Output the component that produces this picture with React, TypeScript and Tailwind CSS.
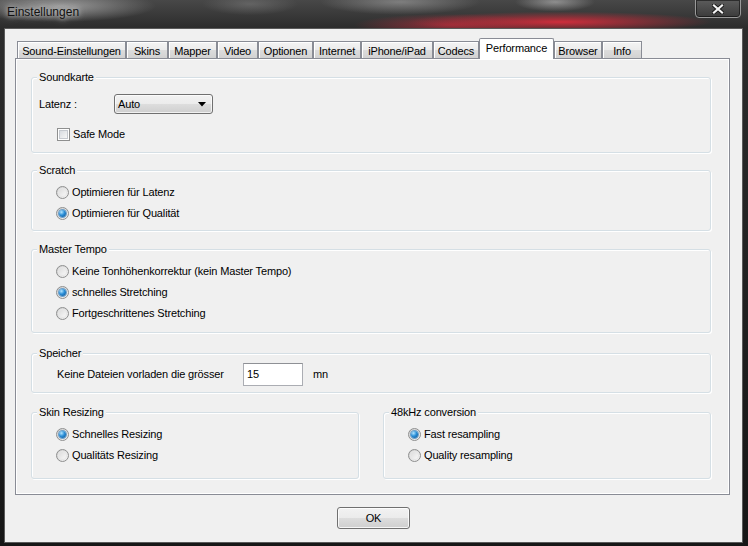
import React from "react";

function Radio({ checked }: { checked?: boolean }) {
  return (
    <div className="w-[13px] h-[13px] rounded-full border border-[#8e8f8f] bg-[linear-gradient(135deg,#cfcfcf,#f4f4f4)] flex items-center justify-center shrink-0">
      {checked ? (
        <div className="w-[7px] h-[7px] rounded-full bg-[radial-gradient(circle_at_35%_30%,#b5e6ff_0%,#2b8fd8_45%,#0a4f8f_100%)] shadow-[0_0_0_1px_#6c9fc9]" />
      ) : (
        <div className="w-[9px] h-[9px] rounded-full bg-[linear-gradient(135deg,#d9d9d9,#fbfbfb)] shadow-[inset_0_0_0_1px_#e6e6e6]" />
      )}
    </div>
  );
}

function Checkbox() {
  return (
    <div className="w-[13px] h-[13px] border border-[#8e8f8f] bg-white flex items-center justify-center shrink-0">
      <div className="w-[9px] h-[9px] border border-[#c5c9cf] bg-[linear-gradient(135deg,#d8dce1,#f7f7f7)]" />
    </div>
  );
}

function Group({
  title,
  className,
  children,
}: {
  title: string;
  className: string;
  children?: React.ReactNode;
}) {
  return (
    <div
      className={
        "relative border border-[#d5dfe5] rounded-[3px] shadow-[inset_1px_1px_0_#ffffff,1px_1px_0_#ffffff] " +
        className
      }
    >
      <span className="absolute left-[5px] top-[-8px] px-[2px] leading-[14px] bg-[#f0f0f0] whitespace-nowrap">
        {title}
      </span>
      {children}
    </div>
  );
}

function RadioRow({ label, checked }: { label: string; checked?: boolean }) {
  return (
    <div className="flex items-center h-[21px] gap-[3px] pl-[24px]">
      <Radio checked={checked} />
      <span className="leading-[13px] whitespace-nowrap">{label}</span>
    </div>
  );
}

const tabs: { label: string; w: string; active?: boolean }[] = [
  { label: "Sound-Einstellungen", w: "w-[109px]" },
  { label: "Skins", w: "w-[42px]" },
  { label: "Mapper", w: "w-[49px]" },
  { label: "Video", w: "w-[41px]" },
  { label: "Optionen", w: "w-[55px]" },
  { label: "Internet", w: "w-[48px]" },
  { label: "iPhone/iPad", w: "w-[72px]" },
  { label: "Codecs", w: "w-[46px]" },
  { label: "Performance", w: "w-[75px]", active: true },
  { label: "Browser", w: "w-[48px]" },
  { label: "Info", w: "w-[40px]" },
];

export default function App() {
  return (
    <div className="relative w-[748px] h-[546px] overflow-hidden font-['Liberation_Sans',Arial,sans-serif] text-[11px] tracking-[-0.15px] text-black bg-[radial-gradient(ellipse_190px_13px_at_560px_22px,rgba(215,45,60,0.95),transparent_80%),radial-gradient(ellipse_120px_14px_at_450px_25px,rgba(190,45,60,0.7),transparent_80%),radial-gradient(ellipse_120px_20px_at_60px_6px,rgba(170,170,170,0.85),transparent_80%),radial-gradient(ellipse_60px_14px_at_250px_4px,rgba(120,120,120,0.6),transparent_80%),radial-gradient(ellipse_100px_16px_at_400px_2px,rgba(150,150,150,0.7),transparent_80%),radial-gradient(ellipse_50px_12px_at_555px_2px,rgba(190,190,190,0.6),transparent_80%),linear-gradient(to_bottom,#484848,#2c2c2c_28px,#161616)]">
      {/* title bar */}
      <div className="relative h-[28px]">
        <span className="absolute left-[7px] top-[5px] text-[12px] leading-[15px] tracking-normal text-[#111] [text-shadow:0_0_5px_#d8d8d8,0_0_9px_#bdbdbd]">
          Einstellungen
        </span>
        <div className="absolute left-[695px] top-[-1px] w-[46px] h-[19px] rounded-b-[4px] border border-[#9a9a9a] bg-[linear-gradient(to_bottom,#5c5c5c,#3b3b3b)] shadow-[inset_0_0_0_1px_rgba(0,0,0,0.5)] flex items-center justify-center">
          <svg width="12" height="10" viewBox="0 0 12 10">
            <path d="M2 1.5 L10 8.5 M10 1.5 L2 8.5" stroke="#1a1a1a" strokeWidth="4" strokeLinecap="square" />
            <path d="M2 1.5 L10 8.5 M10 1.5 L2 8.5" stroke="#f4f4f4" strokeWidth="2.2" strokeLinecap="square" />
          </svg>
        </div>
      </div>

      {/* client area */}
      <div className="ml-[4px] w-[739px] h-[515px] border border-[#5a5a5a] bg-[#f0f0f0] pt-[9px] pl-[10px] flex flex-col">
        {/* tab strip */}
        <div className="flex items-end h-[20px] pl-[2px]">
          {tabs.map((t) =>
            t.active ? (
              <div
                key={t.label}
                className={
                  "relative z-10 -mb-[1px] h-[21px] border-x border-t border-[#898c95] bg-white flex justify-center pt-[3px] rounded-t-[2px] " +
                  t.w
                }
              >
                <span className="leading-[13px] whitespace-nowrap">{t.label}</span>
              </div>
            ) : (
              <div
                key={t.label}
                className={
                  "h-[17px] border-x border-t border-[#898c95] bg-[linear-gradient(to_bottom,#f4f4f4,#ebebeb_50%,#dcdcdc_51%,#d2d2d2)] shadow-[inset_1px_1px_0_#ffffff] flex justify-center pt-[3px] " +
                  t.w
                }
              >
                <span className="leading-[13px] whitespace-nowrap">{t.label}</span>
              </div>
            )
          )}
        </div>

        {/* tab panel */}
        <div className="relative w-[715px] h-[437px] border border-[#898c95] bg-[#f0f0f0] shadow-[inset_1px_1px_0_#ffffff,inset_-1px_-1px_0_#ffffff] pl-[15px] pt-[18px] flex flex-col">
          <Group title="Soundkarte" className="w-[680px] h-[76px]">
            <div className="mt-[16px] pl-[7px] flex items-center h-[20px]">
              <span className="w-[75px] leading-[13px]">Latenz :</span>
              <div className="w-[99px] h-[20px] rounded-[3px] border border-[#707070] bg-[linear-gradient(to_bottom,#f2f2f2_0%,#ebebeb_50%,#dddddd_50%,#cfcfcf_100%)] shadow-[inset_0_0_0_1px_rgba(255,255,255,0.7)] flex items-center justify-between pl-[3px] pr-[6px]">
                <span className="leading-[13px]">Auto</span>
                <svg width="8" height="5" viewBox="0 0 8 5">
                  <path d="M0 0 H8 L4 4.5 Z" fill="#000" />
                </svg>
              </div>
            </div>
            <div className="mt-[14px] pl-[25px] flex items-center gap-[3px]">
              <Checkbox />
              <span className="leading-[13px]">Safe Mode</span>
            </div>
          </Group>

          <Group title="Scratch" className="mt-[17px] w-[680px] h-[61px] pt-[11px]">
            <RadioRow label="Optimieren für Latenz" />
            <RadioRow label="Optimieren für Qualität" checked />
          </Group>

          <Group title="Master Tempo" className="mt-[18px] w-[680px] h-[84px] pt-[11px]">
            <RadioRow label="Keine Tonhöhenkorrektur (kein Master Tempo)" />
            <RadioRow label="schnelles Stretching" checked />
            <RadioRow label="Fortgeschrittenes Stretching" />
          </Group>

          <Group title="Speicher" className="mt-[20px] w-[680px] h-[40px]">
            <div className="mt-[9px] pl-[25px] flex items-center">
              <span className="w-[186px] leading-[13px] whitespace-nowrap">
                Keine Dateien vorladen die grösser
              </span>
              <div className="w-[60px] h-[23px] border border-[#abadb3] border-t-[#8e9095] bg-white flex items-center pl-[3px]">
                <span className="leading-[13px]">15</span>
              </div>
              <span className="ml-[10px] leading-[13px]">mn</span>
            </div>
          </Group>

          <div className="mt-[19px] flex gap-[24px]">
            <Group title="Skin Resizing" className="w-[328px] h-[67px] pt-[11px]">
              <RadioRow label="Schnelles Resizing" checked />
              <RadioRow label="Qualitäts Resizing" />
            </Group>
            <Group title="48kHz conversion" className="w-[328px] h-[67px] pt-[11px]">
              <RadioRow label="Fast resampling" checked />
              <RadioRow label="Quality resampling" />
            </Group>
          </div>
        </div>

        {/* OK button */}
        <div className="mt-[12px] ml-[322px] w-[73px] h-[22px] rounded-[3px] border border-[#707070] bg-[linear-gradient(to_bottom,#f2f2f2_0%,#ebebeb_50%,#dddddd_50%,#cfcfcf_100%)] shadow-[inset_0_0_0_1px_rgba(255,255,255,0.8)] flex items-center justify-center">
          <span className="leading-[13px]">OK</span>
        </div>
      </div>
    </div>
  );
}
